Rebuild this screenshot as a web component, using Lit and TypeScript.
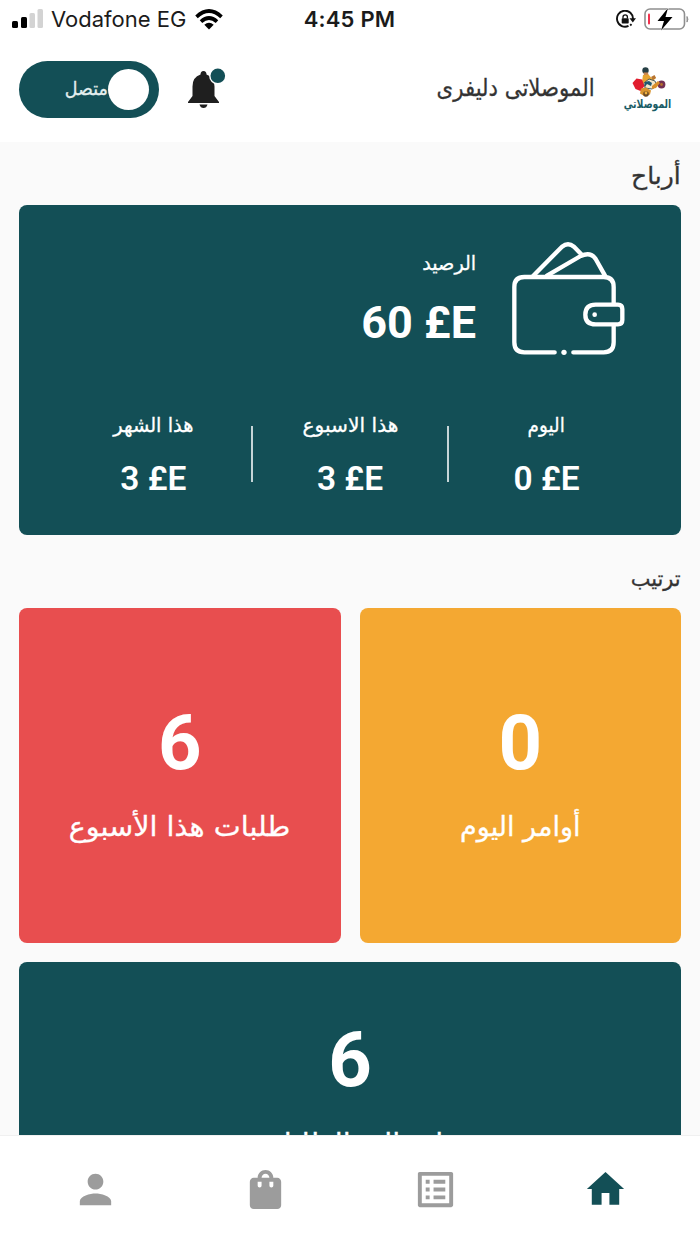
import { LitElement, html, css, svg } from "lit";
import { customElement, property } from "lit/decorators.js";

@customElement("ar-text")
class ArText extends LitElement {
  @property({ type: Number }) size = 24;
  @property({ type: Number }) stretch = 1;
  @property() anchor = "center";
  static styles = css`
    :host { display: block; direction: rtl; white-space: nowrap; font-family: "DejaVu Sans", sans-serif; line-height: 1.2; }
    .t { display: inline-block; -webkit-text-stroke: 0.3px currentColor; }
  `;
  render() {
    return html`<span class="t" style="font-size:${this.size}px;transform:scaleX(${this.stretch});transform-origin:${this.anchor}"><slot></slot></span>`;
  }
}

@customElement("status-bar")
class StatusBar extends LitElement {
  static styles = css`
    :host { display: flex; height: 40px; align-items: center; position: relative; font-family: Inter, sans-serif; color: #1b1b1b; padding-bottom: 2px; box-sizing: border-box; }
    .left { display: flex; align-items: center; padding-left: 12px; width: 292px; box-sizing: border-box; }
    .carrier { font-size: 22px; margin: 0 9px 0 8px; white-space: nowrap; }
    .time { font-size: 22px; font-weight: 600; width: 115px; text-align: center; white-space: nowrap; letter-spacing: 0.2px; }
    .right { display: flex; align-items: center; margin-left: auto; padding-right: 11px; gap: 8px; }
    svg { display: block; flex: none; }
  `;
  render() {
    return html`
      <div class="left">
        <svg width="31" height="20" viewBox="0 0 31 20">
          <rect x="0" y="12" width="6" height="7" rx="1.500" fill="#000" />
          <rect x="9" y="8" width="6" height="11" rx="1.500" fill="#000" />
          <rect x="17.500" y="4" width="5.500" height="15" rx="1.500" fill="#d3d3d3" />
          <rect x="25.500" y="0" width="5.500" height="19" rx="1.500" fill="#d3d3d3" />
        </svg>
        <span class="carrier">Vodafone EG</span>
        <svg width="28" height="21" viewBox="0 0 28 21" fill="none" stroke="#000" stroke-width="3.700">
          <path d="M1.500 7.800Q14-3.800 26.500 7.800" />
          <path d="M6 12.600Q14 5.300 22 12.600" />
          <path d="M9.300 15.800Q14 11.500 18.700 15.800L14 20.500z" fill="#000" stroke="none" />
        </svg>
      </div>
      <div class="time">4:45 PM</div>
      <div class="right">
        <svg width="20" height="19" viewBox="0 0 20 19">
          <path d="M12.500 15.900A8 8 0 1 1 17 9" fill="none" stroke="#111" stroke-width="1.900" />
          <path d="M13.500 8.300h6.500l-3.200 4.200z" fill="#111" />
          <path d="M14.200 15.500l1.300-1.300" stroke="#111" stroke-width="1.800" />
          <rect x="5.700" y="8.200" width="7" height="5.400" rx="0.800" fill="#111" />
          <path d="M7 8.500V7a2.200 2.200 0 0 1 4.400 0v1.500" fill="none" stroke="#111" stroke-width="1.300" />
        </svg>
        <svg width="45" height="24" viewBox="0 0 45 24">
          <rect x="1" y="2" width="39.500" height="20" rx="5" fill="none" stroke="#8f8f8f" stroke-width="1.600" />
          <rect x="4" y="6.500" width="2" height="11" rx="1" fill="#f2324e" />
          <path d="M43 9.500q1.800 2.800 0 5.600z" fill="#8f8f8f" stroke="#8f8f8f" />
          <path d="M24 1L13.500 14h6.500l-3 9.500L28.500 10h-7z" fill="#000" stroke="#fff" stroke-width="1" paint-order="stroke" />
        </svg>
      </div>`;
  }
}

@customElement("brand-logo")
class BrandLogo extends LitElement {
  static styles = css`
    :host { display: block; width: 50px; height: 56px; }
    svg { display: block; overflow: visible; }
    text { font-family: "DejaVu Sans", sans-serif; font-weight: 700; }
  `;
  render() {
    return html`<svg width="50" height="56" viewBox="0 0 50 56">
      <circle cx="22.500" cy="7.500" r="3.200" fill="#263f45" />
      <path d="M20.500 9.500h4.500l0.500 3h-4.500z" fill="#c98552" />
      <path d="M20 12l5.500-.5 3.500 4 3-2 .8 1.500-4 4-4.500-2-.5 4-5-1z" fill="#e6a432" />
      <path d="M9.500 20l4-4.500 5.500 1 2.500 6.500-4 5-5-2z" fill="#e11d2e" />
      <path d="M28 14l3.500-2 1.500 3-3 2z" fill="#b87532" />
      <path d="M21 20l5-4 6 2 2 5-5 3-7-1z" fill="#f3e6c8" stroke="#27434a" stroke-width="0.800" />
      <path d="M22 19l4-1 3 2-1 3-4-2-2 3z" fill="#1e5872" />
      <circle cx="38.500" cy="21.500" r="3.900" fill="#733052" />
      <circle cx="38.500" cy="21.500" r="1.400" fill="#b5702a" />
      <path d="M29 23l6-5 2 2-4 5-4 1z" fill="#d98f2a" />
      <path d="M18 25.500l5-1 5 3-1 4-5 2-5-3z" fill="#d9932d" />
      <circle cx="23" cy="31" r="2.800" fill="#6a4a25" />
      <circle cx="23" cy="30" r="1.400" fill="#f0b13d" />
      <text x="24.500" y="44.500" font-size="12" text-anchor="middle" direction="rtl" textLength="47.500" lengthAdjust="spacingAndGlyphs" fill="#195c66">الموصلاتي</text>
    </svg>`;
  }
}

@customElement("wallet-icon")
class WalletIcon extends LitElement {
  static styles = css`:host { display: block; } svg { display: block; }`;
  render() {
    return html`<svg width="115" height="117" viewBox="485 60 345 351" fill="none" stroke="#fff" stroke-width="13" stroke-linecap="round" stroke-linejoin="round">
      <path d="M616 397H525Q495 397 495 367V201Q495 171 525 171H763Q793 171 793 201V250M793 318V367Q793 397 763 397H672" />
      <path d="M739 254H806Q819 254 819 267V300Q819 313 806 313H739Q708 313 708 284Q708 254 739 254Z" />
      <path d="M552 167L638 80Q656 66 674 80L698 105M593 167L694 108Q724 94 739 117L767 167" />
      <circle cx="736" cy="284" r="7" fill="#fff" stroke="none" />
      <circle cx="644" cy="397" r="8" fill="#fff" stroke="none" />
    </svg>`;
  }
}

const navIcons = [
  { color: "#9c9c9c", d: "M12 12c2.210 0 4-1.790 4-4s-1.790-4-4-4-4 1.790-4 4 1.790 4 4 4zm0 2c-2.670 0-8 1.340-8 4v2h16v-2c0-2.660-5.330-4-8-4z" },
  { color: "#9c9c9c", d: "M18 6h-2c0-2.210-1.790-4-4-4S8 3.790 8 6H6c-1.100 0-2 .9-2 2v12c0 1.100.9 2 2 2h12c1.100 0 2-.9 2-2V8c0-1.100-.9-2-2-2zm-8 4c0 .55-.45 1-1 1s-1-.45-1-1V8h2v2zm2-6c1.100 0 2 .9 2 2h-4c0-1.100.9-2 2-2zm4 6c0 .55-.45 1-1 1s-1-.45-1-1V8h2v2z" },
  { color: "#9c9c9c", d: "M19 5v14H5V5h14m1.100-2H3.900c-.5 0-.9.4-.9.9v16.200c0 .4.4.9.9.9h16.200c.4 0 .9-.5.9-.9V3.900c0-.5-.5-.9-.9-.9zM11 7h6v2h-6V7zm0 4h6v2h-6v-2zm0 4h6v2h-6zM7 7h2v2H7zm0 4h2v2H7zm0 4h2v2H7z" },
  { color: "#134f56", d: "M10 19.800v-6h4v6h5v-8h2.500L12 3 2.500 11.800h2.500v8z" },
];

@customElement("app-root")
class AppRoot extends LitElement {
  static styles = css`
    :host { display: flex; flex-direction: column; width: 700px; height: 1244px; overflow: hidden; background: #fafafa; font-family: Roboto, sans-serif; }
    * { box-sizing: border-box; }
    .top { height: 142px; background: #fff; flex: none; }
    .header { display: flex; height: 102px; padding: 21px 27px 0 19px; align-items: flex-start; }
    .toggle { width: 140px; height: 57px; border-radius: 29px; background: #134f56; display: flex; align-items: center; justify-content: flex-end; padding-right: 10px; color: #e4eeee; }
    .toggle ar-text { height: 25px; }
    .knob { width: 41px; height: 41px; border-radius: 50%; background: #fff; flex: none; }
    .bell { margin: 5px 0 0 26px; display: block; }
    .name { margin: 13px 28px 0 auto; color: #333; }
    brand-logo { margin-top: 2px; }
    .scroll { flex: 1; min-height: 0; overflow: hidden; padding: 0 19px; }
    .heading { height: 63px; padding-top: 20px; color: #333; text-align: right; }
    .heading.second { height: 73px; padding-top: 31px; }
    .earn { height: 330px; border-radius: 8px; background: #134f56; color: #fff; direction: rtl; padding-top: 35px; }
    .balance { display: flex; height: 162px; padding-right: 55px; gap: 35px; }
    .money { direction: ltr; text-align: right; font-size: 45px; font-weight: 700; line-height: 56px; }
    .info { padding-top: 11px; text-align: right; }
    .info ar-text { height: 44px; }
    .periods { display: flex; padding: 0 37px; align-items: flex-start; }
    .period { flex: 1; text-align: center; padding-top: 11px; }
    .period ar-text { height: 44px; }
    .sum { direction: ltr; font-size: 33.500px; font-weight: 600; line-height: 44px; }
    .bar { width: 2px; height: 56px; background: #c5d5d7; margin-top: 24px; }
    .tiles { display: grid; grid-template-columns: 1fr 1fr; column-gap: 19px; row-gap: 19px; }
    .tile { height: 335px; border-radius: 8px; color: #fff; text-align: center; padding-top: 90px; }
    .num { font-size: 76px; font-weight: 700; line-height: 90px; height: 113px; }
    .red { background: #e84e4f; }
    .orange { background: #f4a832; }
    .wide { grid-column: 1 / 3; background: #134f56; padding-top: 53px; }
    .nav { height: 109px; flex: none; background: #fff; border-top: 1px solid #f0f0f0; display: grid; grid-template-columns: repeat(4, 170px); justify-content: center; justify-items: center; padding-top: 30px; }
    .nav svg { width: 47px; height: 47px; display: block; }
  `;
  render() {
    const period = (t: string, v: string, s: number) => html`<div class="period"><ar-text size="20" stretch=${s}>${t}</ar-text><div class="sum">${v}</div></div>`;
    return html`
      <div class="top">
        <status-bar></status-bar>
        <div class="header">
          <div class="toggle"><ar-text size="19" stretch="0.92" anchor="right">متصل</ar-text><div class="knob"></div></div>
          <svg class="bell" width="42" height="44" viewBox="0 0 42 44">
            <path d="M18.500 5q3 0 3 3.500q8 2.500 8 12v9.500l4.500 6v1H3v-1l4.500-6v-9.500q0-9.500 8-12q0-3.500 3-3.500z" fill="#1f1f1f" />
            <path d="M14.500 38.500h8q-1 3.500-4 3.500t-4-3.500z" fill="#1f1f1f" />
            <circle cx="32.800" cy="9.800" r="8.700" fill="#fff" />
            <circle cx="32.800" cy="9.800" r="7.300" fill="#134f56" />
          </svg>
          <ar-text class="name" size="24" stretch="0.885" anchor="right">الموصلاتى دليفرى</ar-text>
          <brand-logo></brand-logo>
        </div>
      </div>
      <div class="scroll">
        <ar-text class="heading" size="24" stretch="1.04" anchor="right">أرباح</ar-text>
        <div class="earn">
          <div class="balance">
            <wallet-icon></wallet-icon>
            <div class="info"><ar-text size="20" stretch="0.96" anchor="right">الرصيد</ar-text><div class="money">60 £E</div></div>
          </div>
          <div class="periods">
            ${period("اليوم", "0 £E", 0.92)}<div class="bar"></div>
            ${period("هذا الاسبوع", "3 £E", 1.01)}<div class="bar"></div>
            ${period("هذا الشهر", "3 £E", 0.97)}
          </div>
        </div>
        <ar-text class="heading second" size="22" stretch="0.95" anchor="right">ترتيب</ar-text>
        <div class="tiles">
          <div class="tile red"><div class="num">6</div><ar-text size="27" stretch="1.06">طلبات هذا الأسبوع</ar-text></div>
          <div class="tile orange"><div class="num">0</div><ar-text size="27">أوامر اليوم</ar-text></div>
          <div class="tile wide"><div class="num">6</div><ar-text size="27" stretch="1.06">إجمالي الطلبات</ar-text></div>
        </div>
      </div>
      <div class="nav">${navIcons.map((i) => html`<svg viewBox="0 0 24 24" fill=${i.color}>${svg`<path d=${i.d} />`}</svg>`)}</div>
    `;
  }
}
